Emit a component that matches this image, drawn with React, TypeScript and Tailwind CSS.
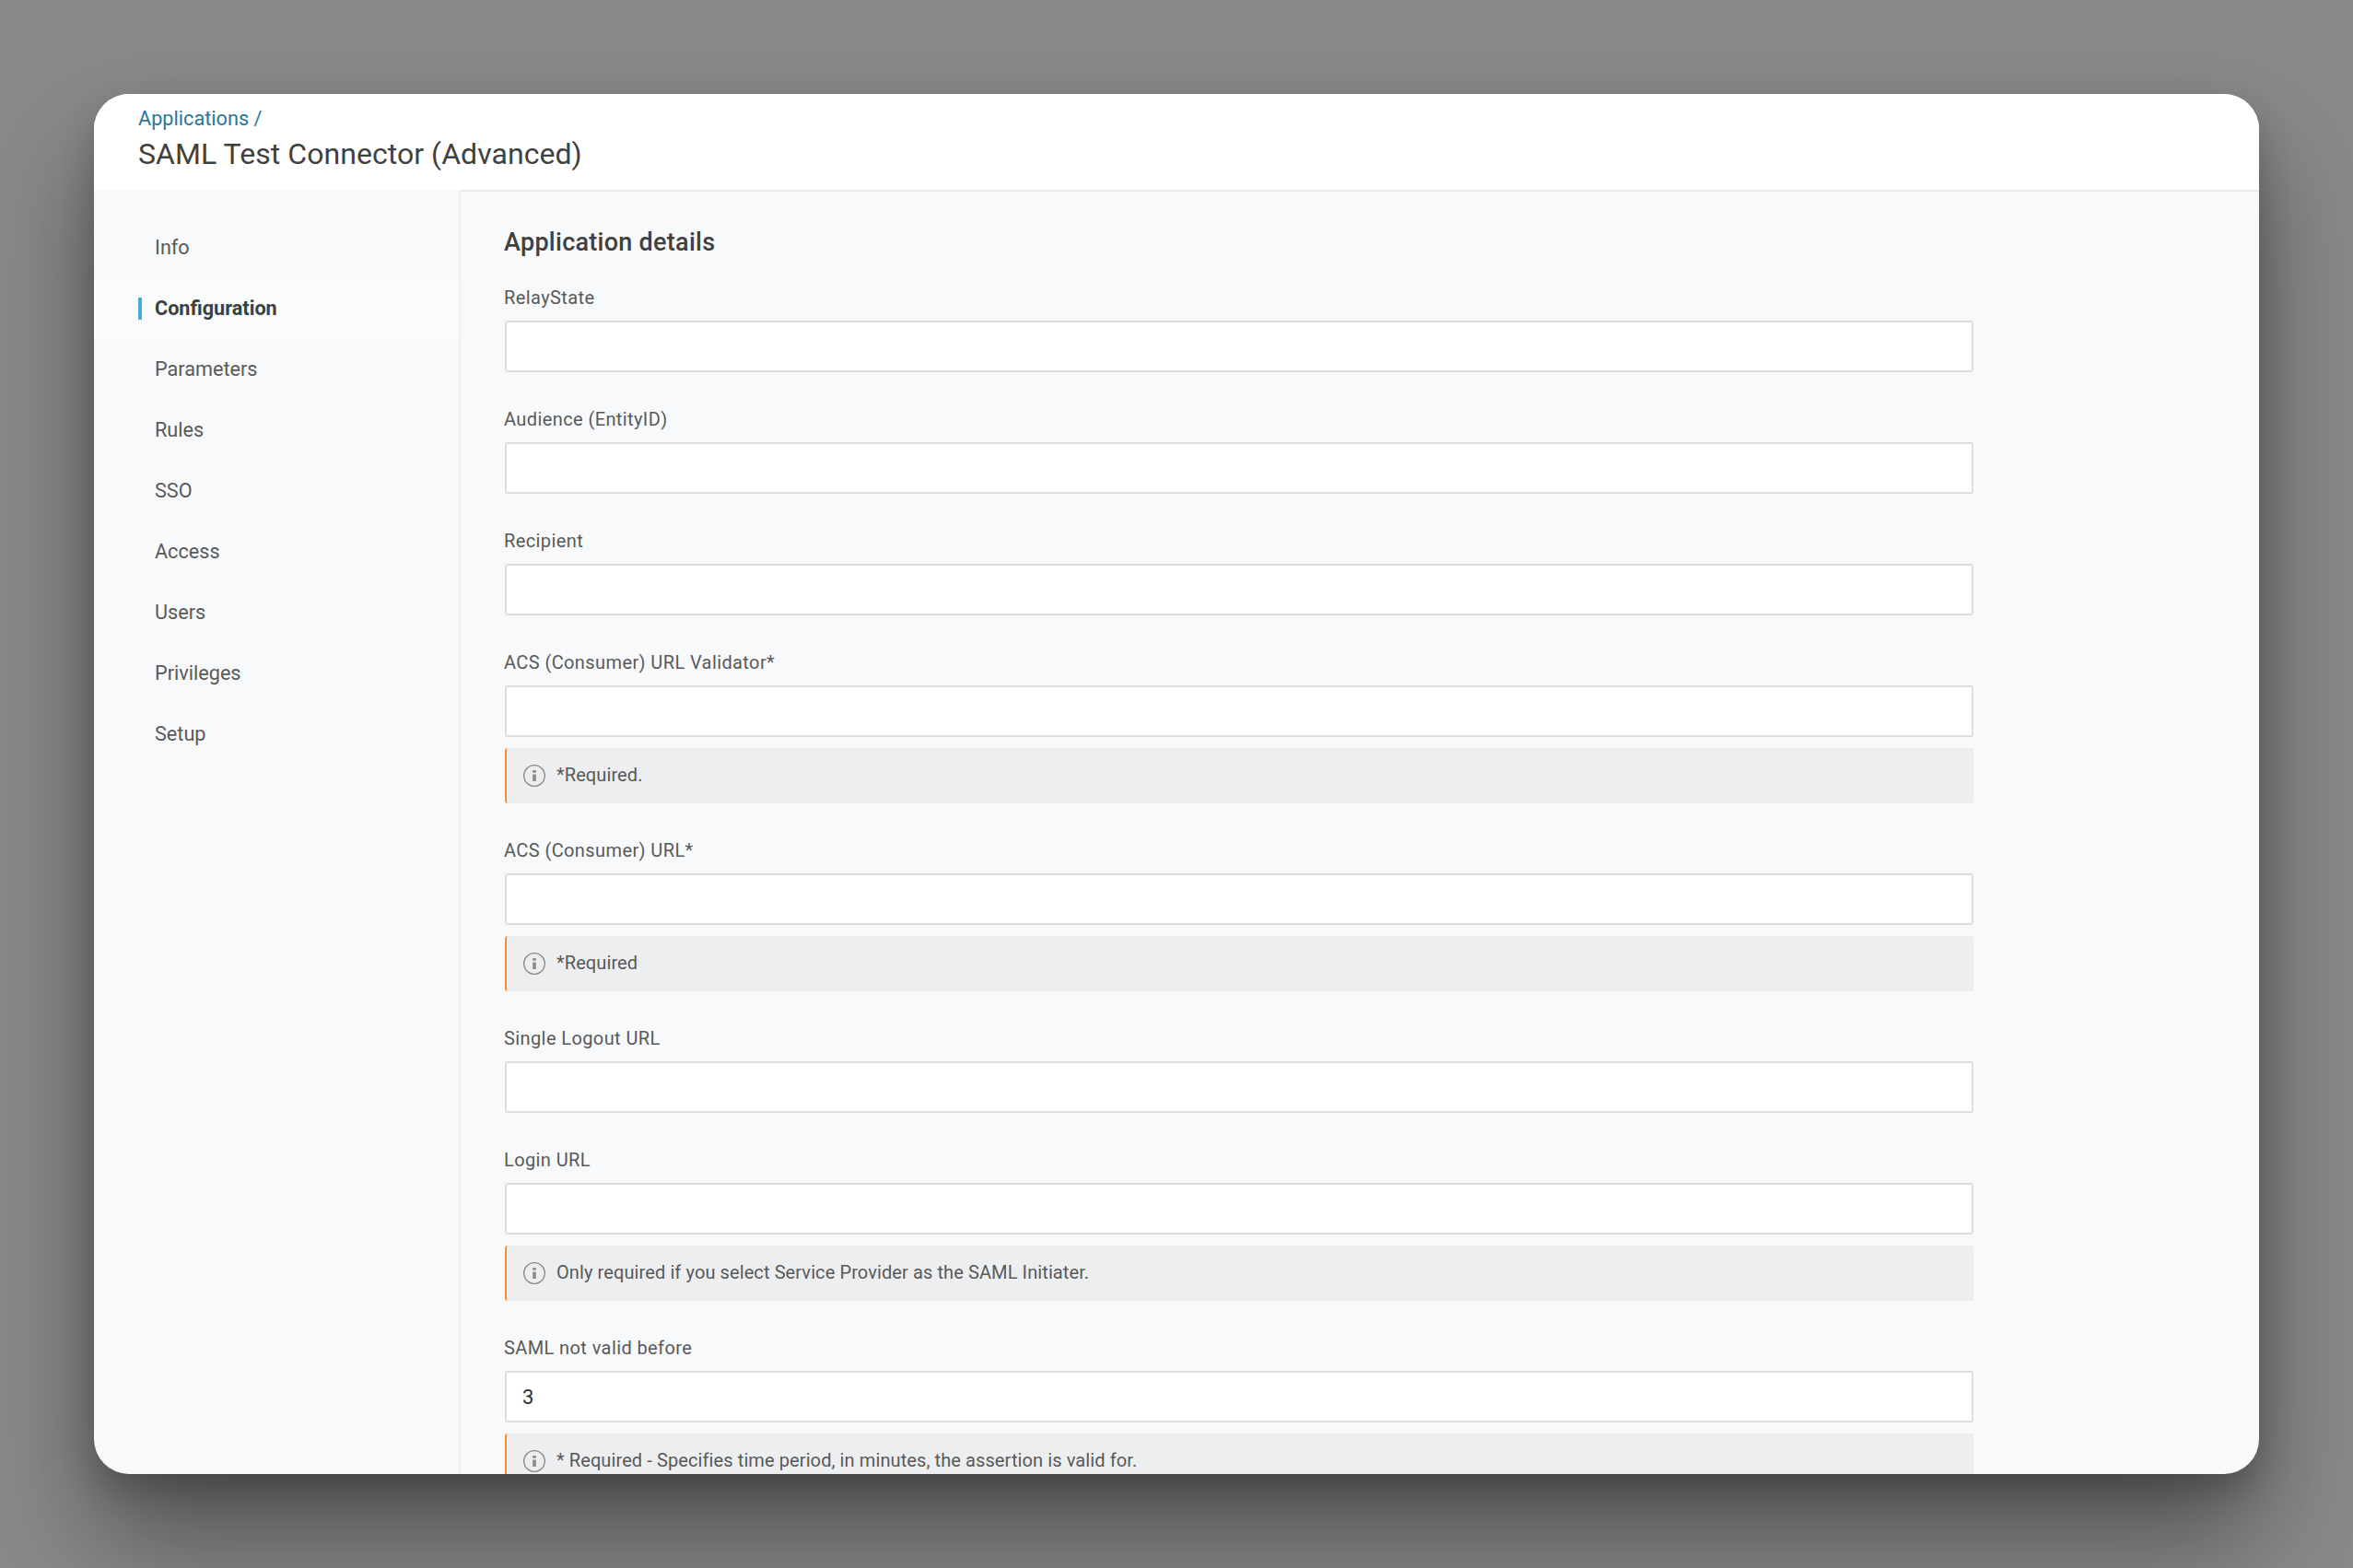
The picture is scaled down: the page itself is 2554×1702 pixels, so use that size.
import clsx from 'clsx';

interface Field {
  label: string;
  value?: string;
  hint?: string;
}

const navItems = ['Info', 'Configuration', 'Parameters', 'Rules', 'SSO', 'Access', 'Users', 'Privileges', 'Setup'];

const fields: Field[] = [
  { label: 'RelayState' },
  { label: 'Audience (EntityID)' },
  { label: 'Recipient' },
  { label: 'ACS (Consumer) URL Validator*', hint: '*Required.' },
  { label: 'ACS (Consumer) URL*', hint: '*Required' },
  { label: 'Single Logout URL' },
  { label: 'Login URL', hint: 'Only required if you select Service Provider as the SAML Initiater.' },
  {
    label: 'SAML not valid before',
    value: '3',
    hint: '* Required - Specifies time period, in minutes, the assertion is valid for.',
  },
];

function InfoIcon() {
  return (
    <svg className="size-6 shrink-0" viewBox="0 0 24 24" fill="none">
      <circle cx="12" cy="12" r="11.3" stroke="#858787" strokeWidth="1.3" />
      <path d="M10.2 6h3.6v2.8h-3.6zM10.2 10.6h3.6v7.4h-3.6z" fill="#8a8c8c" />
    </svg>
  );
}

function Sidebar({ active }: { active: string }) {
  return (
    <nav className="w-[398px] shrink-0 border-r-2 border-[#eef0f1] pt-[30px]">
      {navItems.map((item) => (
        <a
          key={item}
          className={clsx(
            'flex h-[66px] items-center pl-12 text-[21.65px] leading-6',
            item === active ? 'bg-[#fafcfb] font-bold text-[#3c3f3f]' : 'text-[#585a5a]'
          )}
        >
          <span
            className={clsx('border-l-4 pl-[14px]', item === active ? 'border-[#48a9db]' : 'border-transparent')}
          >
            {item}
          </span>
        </a>
      ))}
    </nav>
  );
}

function FormField({ field }: { field: Field }) {
  return (
    <div>
      <label className="-mt-px -ml-px block h-[37px] text-[20px] leading-6 tracking-[0.4px] text-[#585a5a]">
        {field.label}
      </label>
      <input
        readOnly
        defaultValue={field.value}
        className="block h-14 w-full rounded-[3px] border-2 border-[#dcdedd] bg-white px-[17px] text-[22px] text-[#2e3030] outline-none"
      />
      {field.hint && (
        <div className="mt-3 flex h-[60px] items-center gap-3 rounded-[3px] border-l-2 border-[#f0903a] bg-[#edeef0] pl-[18px] text-[20px] tracking-[0.1px] text-[#585a5a]">
          <InfoIcon />
          <span className="pb-0.5 leading-6">{field.hint}</span>
        </div>
      )}
    </div>
  );
}

export default function App() {
  return (
    <div className="h-[1702px] w-[2554px] overflow-hidden bg-[#888988] p-[102px] font-['Roboto',sans-serif]">
      <div className="h-[1498px] w-[2350px] rounded-[38px] shadow-[0_70px_120px_rgba(0,0,0,0.4),0_18px_36px_rgba(0,0,0,0.2)]">
        <div className="flex h-full flex-col overflow-hidden rounded-[38px] bg-[#f8f9fb]">
          <header className="h-[104px] shrink-0 bg-white pt-[14px] pl-12">
            <a className="block text-[21.7px] leading-[26px] text-[#2b7699]">Applications /</a>
            <h1 className="mt-[5px] text-[32px] leading-[40px] tracking-[0.05px] text-[#3f4141]">
              SAML Test Connector (Advanced)
            </h1>
          </header>
          <div className="flex min-h-0 flex-1">
            <Sidebar active="Configuration" />
            <main className="flex-1 border-t-2 border-[#e8eaeb] pt-[37px] pl-12">
              <h2 className="-ml-px h-[67px] text-[27px] leading-9 font-medium tracking-[0.27px] text-[#3f4141]">
                Application details
              </h2>
              <div className="flex w-[1594px] flex-col gap-10">
                {fields.map((field) => (
                  <FormField key={field.label} field={field} />
                ))}
              </div>
            </main>
          </div>
        </div>
      </div>
    </div>
  );
}
